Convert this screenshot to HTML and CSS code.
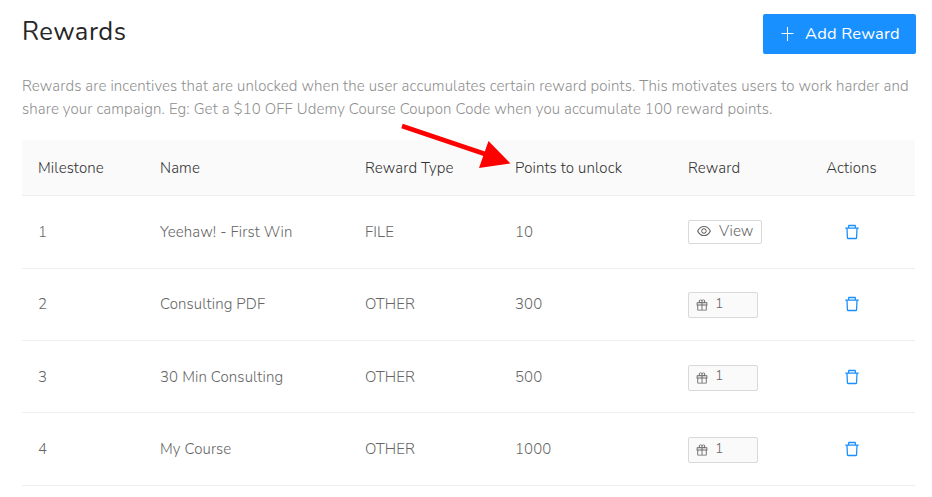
FILE: index.html
```html
<!DOCTYPE html>
<html lang="en">
<head>
    <meta charset="UTF-8">
    <meta name="viewport" content="width=device-width, initial-scale=1.0">
    <title>Rewards</title>
    <link rel="stylesheet" href="styles.css">
</head>
<body>
    <svg class="sprite" aria-hidden="true">
        <symbol id="icon-delete" viewBox="64 64 896 896">
            <path d="M360 184h-8c4.4 0 8-3.6 8-8v8h304v-8c0 4.4 3.6 8 8 8h-8v72h72v-80c0-35.3-28.7-64-64-64H352c-35.3 0-64 28.7-64 64v80h72v-72zm504 72H160c-17.7 0-32 14.3-32 32v32c0 4.4 3.6 8 8 8h60.4l24.7 523c1.6 34.1 29.8 61 63.9 61h454c34.2 0 62.3-26.8 63.9-61l24.7-523H888c4.4 0 8-3.6 8-8v-32c0-17.7-14.3-32-32-32zM731.3 840H292.7l-24.2-512h487l-24.2 512z"/>
        </symbol>
        <symbol id="icon-eye" viewBox="64 64 896 896">
            <path d="M942.2 486.2C847.4 286.5 704.1 186 512 186c-192.2 0-335.4 100.5-430.2 300.3a60.3 60.3 0 0 0 0 51.5C176.6 737.5 319.9 838 512 838c192.2 0 335.4-100.5 430.2-300.3 7.7-16.2 7.7-35 0-51.5zM512 766c-161.3 0-279.4-81.8-362.7-254C232.6 339.8 350.7 258 512 258c161.3 0 279.4 81.8 362.7 254C791.5 684.2 673.4 766 512 766zm-4-430c-97.2 0-176 78.8-176 176s78.8 176 176 176 176-78.8 176-176-78.8-176-176-176zm0 288c-61.9 0-112-50.1-112-112s50.1-112 112-112 112 50.1 112 112-50.1 112-112 112z"/>
        </symbol>
        <symbol id="icon-gift" viewBox="64 64 896 896">
            <path d="M880 310H732.4c13.6-21.4 21.6-46.8 21.6-74 0-76.1-61.9-138-138-138-41.4 0-78.7 18.4-104 47.4-25.3-29-62.6-47.4-104-47.4-76.1 0-138 61.9-138 138 0 27.2 7.9 52.6 21.6 74H144c-17.7 0-32 14.3-32 32v200c0 4.4 3.6 8 8 8h40v344c0 17.7 14.3 32 32 32h640c17.7 0 32-14.3 32-32V550h40c4.4 0 8-3.6 8-8V342c0-17.7-14.3-32-32-32zm-334-74c0-38.6 31.4-70 70-70s70 31.4 70 70-31.4 70-70 70h-70v-70zm-138-70c38.6 0 70 31.4 70 70v70h-70c-38.6 0-70-31.4-70-70s31.4-70 70-70zM180 482V378h298v104H180zm48 68h250v308H228V550zm568 308H546V550h250v308zm48-376H546V378h298v104z"/>
        </symbol>
    </svg>

    <div class="page">
        <div class="header">
            <h1>Rewards</h1>
            <button class="btn-primary">
                <svg class="icon-plus" viewBox="0 0 14 14"><path d="M6.5 0v14M0.5 6.5h12"/></svg>
                <span>Add Reward</span>
            </button>
        </div>

        <p class="description">Rewards are incentives that are unlocked when the user accumulates certain reward points. This motivates users to work harder and<br>share your campaign. Eg: Get a $10 OFF Udemy Course Coupon Code when you accumulate 100 reward points.</p>

        <div class="table">
            <div class="row row-head">
                <div>Milestone</div>
                <div>Name</div>
                <div>Reward Type</div>
                <div>Points to unlock</div>
                <div>Reward</div>
                <div class="actions">Actions</div>
            </div>
            <div class="row">
                <div>1</div>
                <div>Yeehaw! - First Win</div>
                <div>FILE</div>
                <div>10</div>
                <div><button class="btn-view"><svg class="icon-eye"><use href="#icon-eye"/></svg>View</button></div>
                <div class="actions"><svg class="icon-delete"><use href="#icon-delete"/></svg></div>
            </div>
            <div class="row">
                <div>2</div>
                <div>Consulting PDF</div>
                <div>OTHER</div>
                <div>300</div>
                <div><span class="tag"><svg class="icon-gift"><use href="#icon-gift"/></svg><span>1</span></span></div>
                <div class="actions"><svg class="icon-delete"><use href="#icon-delete"/></svg></div>
            </div>
            <div class="row">
                <div>3</div>
                <div>30 Min Consulting</div>
                <div>OTHER</div>
                <div>500</div>
                <div><span class="tag"><svg class="icon-gift"><use href="#icon-gift"/></svg><span>1</span></span></div>
                <div class="actions"><svg class="icon-delete"><use href="#icon-delete"/></svg></div>
            </div>
            <div class="row">
                <div>4</div>
                <div>My Course</div>
                <div>OTHER</div>
                <div>1000</div>
                <div><span class="tag"><svg class="icon-gift"><use href="#icon-gift"/></svg><span>1</span></span></div>
                <div class="actions"><svg class="icon-delete"><use href="#icon-delete"/></svg></div>
            </div>
        </div>

        <svg class="arrow" viewBox="0 0 932 497">
            <path d="M402 126L485 154" stroke="#ff0000" stroke-width="4.5"/>
            <path d="M488.500 141L510.500 163.500L479 168z" fill="#ff0000"/>
        </svg>
    </div>
</body>
</html>
```
FILE: styles.css
```css
* {
    box-sizing: border-box;
}
body {
    margin: 0;
    background: #fff;
    color: #666;
    font-family: Nunito, 'Open Sans', sans-serif;
    font-size: 15px;
    font-weight: 300;
    letter-spacing: 0.12px;
}
.sprite {
    display: none;
}
.page {
    position: relative;
    height: 497px;
    padding: 14px 16px 0 22px;
    overflow: hidden;
}
.header {
    display: flex;
    justify-content: space-between;
    align-items: flex-start;
    height: 61px;
}
h1 {
    margin: 0;
    padding-top: 1px;
    color: #262626;
    font-size: 25.5px;
    font-weight: 400;
    line-height: 33px;
    letter-spacing: 0.5px;
}
button {
    font-family: inherit;
    letter-spacing: inherit;
}
.btn-primary {
    display: flex;
    align-items: center;
    gap: 10px;
    width: 153px;
    height: 40px;
    padding: 0 0 1px 18px;
    border: 0;
    border-radius: 2px;
    background: #1890ff;
    color: #fff;
    font-size: 16.5px;
    font-weight: 400;
    letter-spacing: 0.2px;
    white-space: nowrap;
}
.icon-plus {
    flex: none;
    width: 14px;
    height: 14px;
    margin-top: 1px;
    fill: none;
    stroke: #fff;
    stroke-width: 1;
}
.description {
    height: 65px;
    margin: 0;
    color: #8f8f8f;
    line-height: 23px;
    white-space: nowrap;
}
.row {
    display: grid;
    grid-template-columns: 122px 205px 150px 173px 116px 127px;
    align-items: center;
    width: 893px;
    height: 72.4px;
    border-bottom: 1px solid #eee;
}
.row > div {
    padding-left: 16px;
}
.row-head {
    height: 56.15px;
    background: #fafafa;
    color: #333;
}
.row > .actions {
    display: flex;
    justify-content: center;
    padding: 0;
}
.btn-view,
.tag {
    display: flex;
    align-items: center;
    border: 1px solid #d9d9d9;
    border-radius: 2px;
    background: #fff;
    color: #666;
}
.btn-view {
    gap: 8px;
    width: 74px;
    height: 24px;
    padding: 0 0 1px 8px;
    font-size: 15px;
    font-weight: 300;
}
.tag {
    gap: 7px;
    width: 70px;
    height: 26px;
    margin-top: 2px;
    padding-left: 7px;
    background: #fafafa;
    font-size: 14px;
}
.tag span {
    margin-top: -4px;
}
.icon-eye {
    flex: none;
    width: 14px;
    height: 14px;
    fill: #666;
}
.icon-gift {
    flex: none;
    width: 12px;
    height: 12px;
    fill: #666;
}
.icon-delete {
    width: 16px;
    height: 16px;
    fill: #1890ff;
}
/* pointer drawn over the table header */
.arrow {
    position: absolute;
    top: 0;
    left: 0;
    width: 932px;
    height: 497px;
    pointer-events: none;
}
```
